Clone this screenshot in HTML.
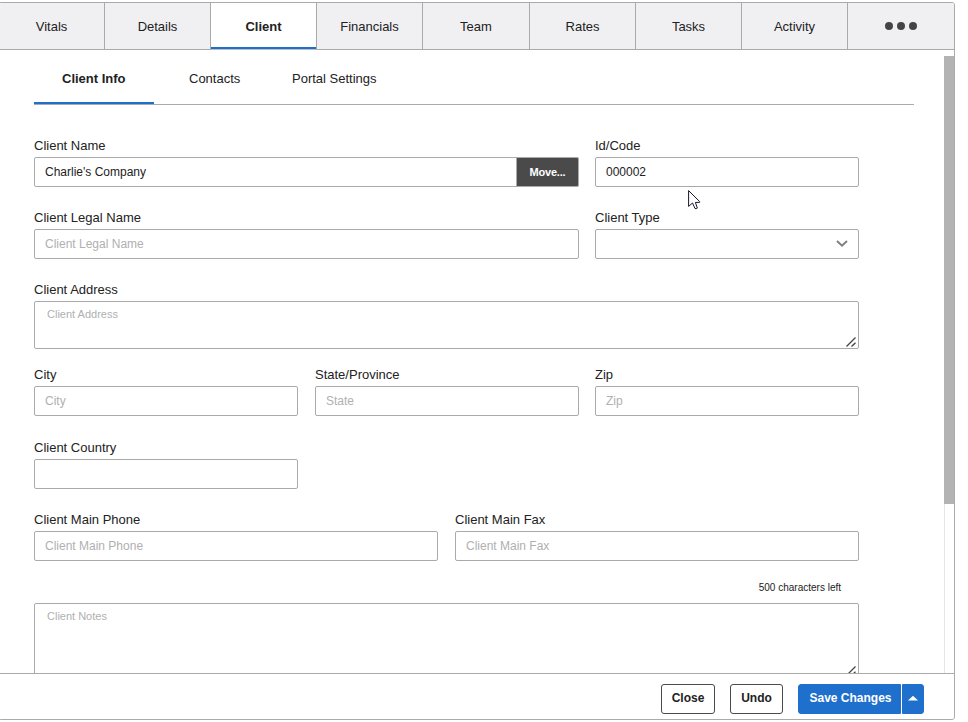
<!DOCTYPE html>
<html lang="en">
<head>
<meta charset="utf-8">
<title>Client Info</title>
<style>
*{box-sizing:border-box;margin:0;padding:0}
html,body{width:968px;height:722px;overflow:hidden;background:#fff}
body{font-family:"Liberation Sans",sans-serif;font-size:13px;color:#222;position:relative}
.abs{position:absolute}
#frame{position:absolute;left:-2px;top:2px;width:957px;height:718px;border:1px solid #aaa;border-radius:3px;overflow:hidden;background:#fff}
#tabs{position:absolute;left:0;top:0;width:955px;height:47px;background:#f0f0f2;border-bottom:1px solid #aaa;display:flex}
.tab{width:106px;height:46px;border-right:1px solid #aaa;text-align:center;line-height:48px;font-size:13px;color:#222}
.tab.active{background:#fff;font-weight:bold;box-shadow:inset 0 -2px 0 #1f6fcc}
.tab.more{border-right:none;width:106px;position:relative}
.tab.active{position:relative}
.tab.active::after{content:"";position:absolute;left:0;right:0;bottom:-1px;height:1px;background:#bdbdbd}
.dot{position:absolute;top:19px;width:8px;height:8px;border-radius:50%;background:#444}
#content{position:absolute;left:0;top:46px;width:955px;height:624px;overflow:hidden}
#sub{position:absolute;left:35px;top:53px;width:880px;height:3px;border-bottom:1px solid #aaa}
.st{position:absolute;top:22px;height:16px;line-height:16px;font-size:13px;color:#222;white-space:nowrap}
#subul{position:absolute;left:35px;top:53px;width:120px;height:2px;background:#1f6fcc}
.lbl{position:absolute;margin-top:1px;font-size:13px;line-height:16px;color:#222;white-space:nowrap}
.inp{position:absolute;height:30px;border:1px solid #aaa;border-radius:2px;background:#fff;font-size:12px;line-height:28px;padding-left:10px;color:#222;white-space:nowrap;overflow:hidden}
.ph{color:#b0b0b0}
.ta{position:absolute;border:1px solid #aaa;border-radius:2px;background:#fff;font-size:11px;line-height:14px;padding:5px 0 0 12px;color:#b0b0b0}
#move{position:absolute;left:517px;top:108px;width:63px;height:30px;border:1px solid #aaa;background:#4a4a4a;color:#fff;font-weight:bold;font-size:11px;letter-spacing:-0.2px;line-height:28px;text-align:center;border-radius:0 2px 2px 0}
#footer{position:absolute;left:0;top:670px;width:955px;height:46px;border-top:1px solid #aaa;background:#fff}
.btn{position:absolute;top:10px;height:30px;border:1px solid #4a4a4a;border-radius:3px;background:#fff;color:#222;font-weight:bold;font-size:12px;line-height:26px;text-align:center}
.btn.pri{background:#1f6fcc;border-color:#1f6fcc;color:#fff}
#sbtrack{position:absolute;left:945px;top:53px;width:10px;height:618px;background:#fff;border-left:1px solid #e6e6e6}
#sbthumb{position:absolute;left:945px;top:53px;width:10px;height:448px;background:#b3b3b3}
</style>
</head>
<body>
<div id="frame">
  <div id="content">
    <div id="sub"></div>
    <div id="subul"></div>
    <div class="st" style="left:63px;font-weight:bold">Client Info</div>
    <div class="st" style="left:190px">Contacts</div>
    <div class="st" style="left:293px">Portal Settings</div>

    <div class="lbl" style="left:35px;top:88px">Client Name</div>
    <div class="inp" style="left:35px;top:108px;width:545px">Charlie's Company</div>
    <div id="move">Move...</div>
    <div class="lbl" style="left:596px;top:88px">Id/Code</div>
    <div class="inp" style="left:596px;top:108px;width:264px">000002</div>

    <div class="lbl" style="left:35px;top:160px">Client Legal Name</div>
    <div class="inp ph" style="left:35px;top:180px;width:545px">Client Legal Name</div>
    <div class="lbl" style="left:596px;top:160px">Client Type</div>
    <div class="inp" style="left:596px;top:180px;width:264px"></div>
    <svg class="abs" style="left:836px;top:190px" width="14" height="10" viewBox="0 0 14 10"><path d="M2 2 L7 6.7 L12 2" fill="none" stroke="#808080" stroke-width="2"/></svg>

    <div class="lbl" style="left:35px;top:232px">Client Address</div>
    <div class="ta" style="left:35px;top:252px;width:825px;height:48px">Client Address</div>
    <svg class="abs" style="left:846px;top:287px" width="12" height="12" viewBox="0 0 12 12"><path d="M1.5 10.5 L10.5 1.5 M6.5 10.5 L10.5 6.7" fill="none" stroke="#444" stroke-width="1.3"/></svg>

    <div class="lbl" style="left:35px;top:317px">City</div>
    <div class="inp ph" style="left:35px;top:337px;width:264px">City</div>
    <div class="lbl" style="left:316px;top:317px">State/Province</div>
    <div class="inp ph" style="left:316px;top:337px;width:264px">State</div>
    <div class="lbl" style="left:596px;top:317px">Zip</div>
    <div class="inp ph" style="left:596px;top:337px;width:264px">Zip</div>

    <div class="lbl" style="left:35px;top:390px">Client Country</div>
    <div class="inp" style="left:35px;top:410px;width:264px"></div>

    <div class="lbl" style="left:35px;top:462px">Client Main Phone</div>
    <div class="inp ph" style="left:35px;top:482px;width:404px">Client Main Phone</div>
    <div class="lbl" style="left:456px;top:462px">Client Main Fax</div>
    <div class="inp ph" style="left:456px;top:482px;width:404px">Client Main Fax</div>

    <div class="lbl" style="left:642px;width:200px;text-align:right;top:531px;font-size:10px;line-height:14px">500 characters left</div>
    <div class="ta" style="left:35px;top:554px;width:825px;height:75px">Client Notes</div>
    <svg class="abs" style="left:846px;top:616px" width="12" height="12" viewBox="0 0 12 12"><path d="M1.5 10.5 L10.5 1.5 M6.5 10.5 L10.5 6.7" fill="none" stroke="#444" stroke-width="1.3"/></svg>
  </div>
  <div id="sbtrack"></div>
  <div id="sbthumb"></div>
  <div id="tabs">
    <div class="tab">Vitals</div>
    <div class="tab">Details</div>
    <div class="tab active">Client</div>
    <div class="tab">Financials</div>
    <div class="tab" style="width:107px">Team</div>
    <div class="tab">Rates</div>
    <div class="tab">Tasks</div>
    <div class="tab">Activity</div>
    <div class="tab more"><span class="dot" style="left:37px"></span><span class="dot" style="left:49px"></span><span class="dot" style="left:61px"></span></div>
  </div>
  <div id="footer">
    <div class="btn" style="left:662px;width:54px">Close</div>
    <div class="btn" style="left:731px;width:53px">Undo</div>
    <div class="btn pri" style="left:799px;width:103px;padding-left:2px;border-radius:3px 0 0 3px">Save Changes</div>
    <div class="btn pri" style="left:903px;width:22px;border-radius:0 3px 3px 0"></div>
    <svg class="abs" style="left:908px;top:21px" width="12" height="8" viewBox="0 0 12 8"><path d="M1 5.6 L6 0.7 L11 5.6 Z" fill="#fff"/></svg>
  </div>
</div>
<!-- mouse cursor -->
<svg class="abs" style="left:688px;top:190px;overflow:visible" width="14" height="21" viewBox="0 0 14 21"><path d="M0.6 0.6 L0.6 16.4 L4.5 13 L7 18.5 Q8.2 19.1 9.3 18.1 L7.4 12.4 L11.6 12.4 L11.6 11.5 Z" fill="#fff" stroke="#15152a" stroke-width="1" stroke-linejoin="miter"/></svg>
</body>
</html>
